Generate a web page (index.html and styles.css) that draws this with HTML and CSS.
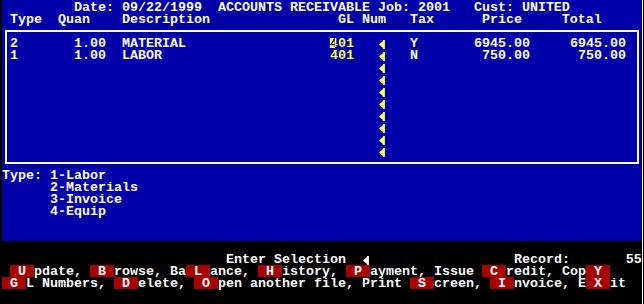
FILE: index.html
```html
<!DOCTYPE html>
<html>
<head>
    <meta charset="UTF-8">
    <title>Accounts Receivable</title>
    <link rel="stylesheet" href="styles.css">
</head>
<body>
    <div class="screen">
        <div class="panel">
            <div class="row">         Date: 09/22/1999  ACCOUNTS RECEIVABLE Job: 2001   Cust: UNITED</div>
            <div class="row"> Type  Quan    Description                GL Num   Tax      Price     Total</div>
            <div class="box">
                <div class="row">2       1.00  MATERIAL                  <span class="gl"><span class="cur"><span class="cur-ch">4</span></span>01</span>   <span class="arr"></span>   Y       6945.00     6945.00</div>
                <div class="row">1       1.00  LABOR                     <span class="gl">401</span>   <span class="arr"></span>   N        750.00      750.00</div>
                <div class="row">                                              <span class="arr"></span></div>
                <div class="row">                                              <span class="arr"></span></div>
                <div class="row">                                              <span class="arr"></span></div>
                <div class="row">                                              <span class="arr"></span></div>
                <div class="row">                                              <span class="arr"></span></div>
                <div class="row">                                              <span class="arr"></span></div>
                <div class="row">                                              <span class="arr"></span></div>
                <div class="row">                                              <span class="arr"></span></div>
            </div>
            <div class="row">Type: 1-Labor</div>
            <div class="row">      2-Materials</div>
            <div class="row">      3-Invoice</div>
            <div class="row">      4-Equip</div>
            <div class="row"></div>
            <div class="row"></div>
        </div>
        <div class="bar">
            <div class="row"></div>
            <div class="row">                            Enter Selection  <span class="arr white"></span>                  Record:       55</div>
            <div class="row"> <span class="key"> U </span>pdate, <span class="key"> B </span>rowse, Ba<span class="key"> L </span>ance, <span class="key"> H </span>istory, <span class="key"> P </span>ayment, Issue <span class="key"> C </span>redit, Cop<span class="key"> Y </span></div>
            <div class="row"><span class="key"> G </span>L Numbers, <span class="key"> D </span>elete, <span class="key"> O </span>pen another file, Print <span class="key"> S </span>creen, <span class="key"> I </span>nvoice, E<span class="key"> X </span>it</div>
            <div class="row"></div>
        </div>
    </div>
</body>
</html>
```

FILE: styles.css
```css
body {
    margin: 0;
    background-color: #000000;
    font-family: "Liberation Mono", "DejaVu Sans Mono", monospace;
    font-weight: bold;
    font-size: 13.33px;
    color: #fcfcfc;
}
.screen {
    width: 640px;
    margin-left: 2px;
    border-right: 1px solid #fcfcfc;
}
.panel {
    background-color: #0000a8;
    padding-top: 1px;
}
.bar {
    background-color: #000000;
    padding-bottom: 3px;
}
.row {
    height: 12px;
    line-height: 14px;
    white-space: pre;
}
.box {
    margin: 5px 3px;
    padding: 5px 0 5px 3px;
    border: 2px solid #fcfcfc;
}
.gl {
    color: #fcfc54;
}
/* cursor sitting on the first digit of the GL number */
.cur {
    background: linear-gradient(#fcfc54, #fcfc54) 0 2px / 5px 10px no-repeat;
}
.cur-ch {
    background: linear-gradient(to right, #0000a8 5px, #fcfc54 5px);
    -webkit-background-clip: text;
    background-clip: text;
    color: transparent;
}
.arr {
    display: inline-block;
    width: 8px;
    height: 12px;
    vertical-align: top;
    background-color: #fcfc54;
    clip-path: polygon(1px 7.5px, 5px 4px, 5px 3px, 7px 3px, 7px 12px, 5px 12px, 5px 11px);
}
.arr.white {
    background-color: #fcfcfc;
}
.key {
    display: inline-block;
    height: 12px;
    vertical-align: top;
    background-color: #a80000;
}
```
